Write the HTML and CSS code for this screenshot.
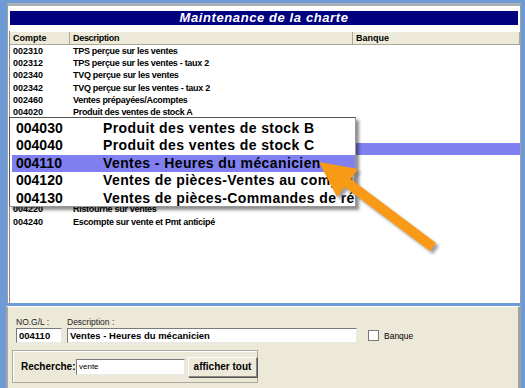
FILE: index.html
```html
<!DOCTYPE html>
<html lang="fr">
<head>
<meta charset="UTF-8">
<title>Maintenance de la charte</title>
<link rel="stylesheet" href="styles.css">
</head>
<body>

<div class="win">

<div class="title">Maintenance de la charte</div>

<div class="list">

<div class="head">
<span class="c1">Compte</span>
<span class="c2">Description</span>
<span class="c3">Banque</span>
</div>

<div class="row"><span class="c1">002310</span><span class="c2">TPS perçue sur les ventes</span></div>
<div class="row"><span class="c1">002312</span><span class="c2">TPS perçue sur les ventes - taux 2</span></div>
<div class="row"><span class="c1">002340</span><span class="c2">TVQ perçue sur les ventes</span></div>
<div class="row"><span class="c1">002342</span><span class="c2">TVQ perçue sur les ventes - taux 2</span></div>
<div class="row"><span class="c1">002460</span><span class="c2">Ventes prépayées/Acomptes</span></div>
<div class="row"><span class="c1">004020</span><span class="c2">Produit des ventes de stock A</span></div>
<div class="row"><span class="c1">004030</span><span class="c2">Produit des ventes de stock B</span></div>
<div class="row"><span class="c1">004040</span><span class="c2">Produit des ventes de stock C</span></div>
<div class="row sel"><span class="c1">004110</span><span class="c2">Ventes - Heures du mécanicien</span></div>
<div class="row"><span class="c1">004120</span><span class="c2">Ventes de pièces-Ventes au comptoir</span></div>
<div class="row"><span class="c1">004130</span><span class="c2">Ventes de pièces-Commandes de réparation</span></div>
<div class="row"><span class="c1">004140</span><span class="c2">Ventes de pièces-Garantie</span></div>
<div class="row"><span class="c1">004210</span><span class="c2">Retours sur ventes</span></div>
<div class="row"><span class="c1">004220</span><span class="c2">Ristourne sur ventes</span></div>
<div class="row"><span class="c1">004240</span><span class="c2">Escompte sur vente et Pmt anticipé</span></div>

</div>

</div>

<!-- zoomed-in part of the list -->
<div class="zoom">
<div class="zrow"><span class="z1">004030</span><span class="z2">Produit des ventes de stock B</span></div>
<div class="zrow"><span class="z1">004040</span><span class="z2">Produit des ventes de stock C</span></div>
<div class="zrow sel"><span class="z1">004110</span><span class="z2">Ventes - Heures du mécanicien</span></div>
<div class="zrow"><span class="z1">004120</span><span class="z2">Ventes de pièces-Ventes au comptoir</span></div>
<div class="zrow"><span class="z1">004130</span><span class="z2">Ventes de pièces-Commandes de réparation</span></div>
</div>

<svg class="arrow" width="525" height="388" viewBox="0 0 525 388">
<defs>
<filter id="blur"><feGaussianBlur stdDeviation="1.5"/></filter>
</defs>
<g fill="#777" stroke="#777" filter="url(#blur)" transform="translate(3,3)" opacity=".7">
<line x1="345" y1="181" x2="433" y2="247" stroke-width="10"/>
<polygon points="319,162 358,169 337,197" stroke="none"/>
</g>
<g fill="#f99a17" stroke="#f99a17">
<line x1="345" y1="181" x2="433" y2="247" stroke-width="10"/>
<polygon points="319,162 358,169 337,197" stroke="none"/>
</g>
</svg>

<div class="panel">

<div class="fields">

<div class="field">
<label>NO.G/L :</label>
<div class="box code">004110</div>
</div>

<div class="field">
<label>Description :</label>
<div class="box desc">Ventes - Heures du mécanicien</div>
</div>

<div class="check">
<span class="cb"></span>
Banque
</div>

</div>

<div class="group">
<b>Recherche:</b>
<div class="box search">vente</div>
<button>afficher tout</button>
</div>

</div>

</body>
</html>
```

FILE: styles.css
```css
body{
margin:0;
background:#6e9bd6;
font-family:"Liberation Sans", Arial, sans-serif;
color:#000;
position:relative;
width:525px;
height:388px;
overflow:hidden;
}

.win{
margin:3px 4px 0 7px;
height:300px;
background:#fff;
border-top:3px solid #aab0b8;
border-left:1px solid #9aa0a8;
border-right:1px solid #9aa0a8;
padding:3px 0 0 0;
box-sizing:border-box;
display:flex;
flex-direction:column;
}

.title{
margin:2px 2px 0 2px;
height:14px;
background:#00007e;
color:#fff;
font-weight:bold;
font-style:italic;
font-size:13px;
letter-spacing:.6px;
line-height:14px;
text-align:center;
}

.list{
margin:6px 0 0 1px;
flex:1;
overflow:hidden;
border-left:1px solid #8a8a8a;
}

.head{
display:flex;
height:12px;
background:#ece9d8;
border-top:1px solid #fff;
border-bottom:1px solid #aca899;
font-size:9px;
font-weight:bold;
line-height:12px;
}

.head span{
border-right:1px solid #aca899;
box-sizing:border-box;
}

.c1{
width:60px;
padding-left:3px;
flex:none;
box-sizing:border-box;
}

.c2{
width:283px;
padding-left:3px;
flex:none;
box-sizing:border-box;
letter-spacing:-.3px;
white-space:nowrap;
}

.c3{
flex:1;
padding-left:3px;
}

.row{
display:flex;
height:12.2px;
line-height:12.2px;
font-size:9px;
font-weight:bold;
}

.sel{
background:#8080f2;
}

.zoom{
position:absolute;
left:9px;
top:117px;
width:347px;
height:90px;
background:#fff;
border:1px solid #555;
border-right-color:#999;
border-bottom-color:#999;
box-sizing:border-box;
padding-top:2px;
box-shadow:3px 3px 3px rgba(0,0,0,.45);
overflow:hidden;
}

.zrow{
display:flex;
height:17.4px;
line-height:17.4px;
font-size:14px;
font-weight:bold;
letter-spacing:.4px;
white-space:nowrap;
padding-left:6px;
}

.zrow.sel{
margin-left:2px;
padding-left:4px;
}

.z1{
width:87px;
flex:none;
letter-spacing:0;
}

.arrow{
position:absolute;
left:0;
top:0;
pointer-events:none;
}

.panel{
margin:3px 4px 0 6px;
height:82px;
background:#ece9d8;
border-top:1px solid #fff;
border-left:2px solid #a8a8a8;
border-right:3px solid #a0a0a0;
box-sizing:border-box;
padding:10px 0 0 8px;
}

.fields{
display:flex;
align-items:flex-end;
gap:5px;
}

.field label{
display:block;
font-size:8.5px;
line-height:10px;
color:#222;
margin-bottom:1px;
}

.box{
height:15px;
background:#fff;
border-top:1px solid #7a7a7a;
border-left:1px solid #7a7a7a;
border-right:1px solid #e8e8e8;
border-bottom:1px solid #e8e8e8;
box-sizing:border-box;
font-size:9.5px;
font-weight:bold;
line-height:13px;
padding-left:2px;
white-space:nowrap;
}

.code{
width:46px;
}

.desc{
width:290px;
}

.check{
display:flex;
align-items:center;
gap:5px;
font-size:8.5px;
margin-left:6px;
height:15px;
}

.cb{
width:9px;
height:9px;
background:#fff;
border:1px solid #777;
}

.group{
margin:7px 0 0 -4px;
width:246px;
height:33px;
border:1px solid #aca899;
box-shadow:inset 1px 1px 0 #fff;
box-sizing:border-box;
display:flex;
align-items:center;
padding-left:8px;
}

.group b{
font-size:10px;
width:55px;
flex:none;
}

.search{
width:109px;
height:16px;
font-weight:normal;
font-size:8px;
}

button{
margin-left:3px;
width:69px;
height:20px;
background:#ece9d8;
border:1px solid #888;
border-top-color:#fff;
border-left-color:#fff;
box-shadow:1px 1px 0 #555;
font-family:"Liberation Sans", Arial, sans-serif;
font-weight:bold;
font-size:10px;
padding:0;
}
```
